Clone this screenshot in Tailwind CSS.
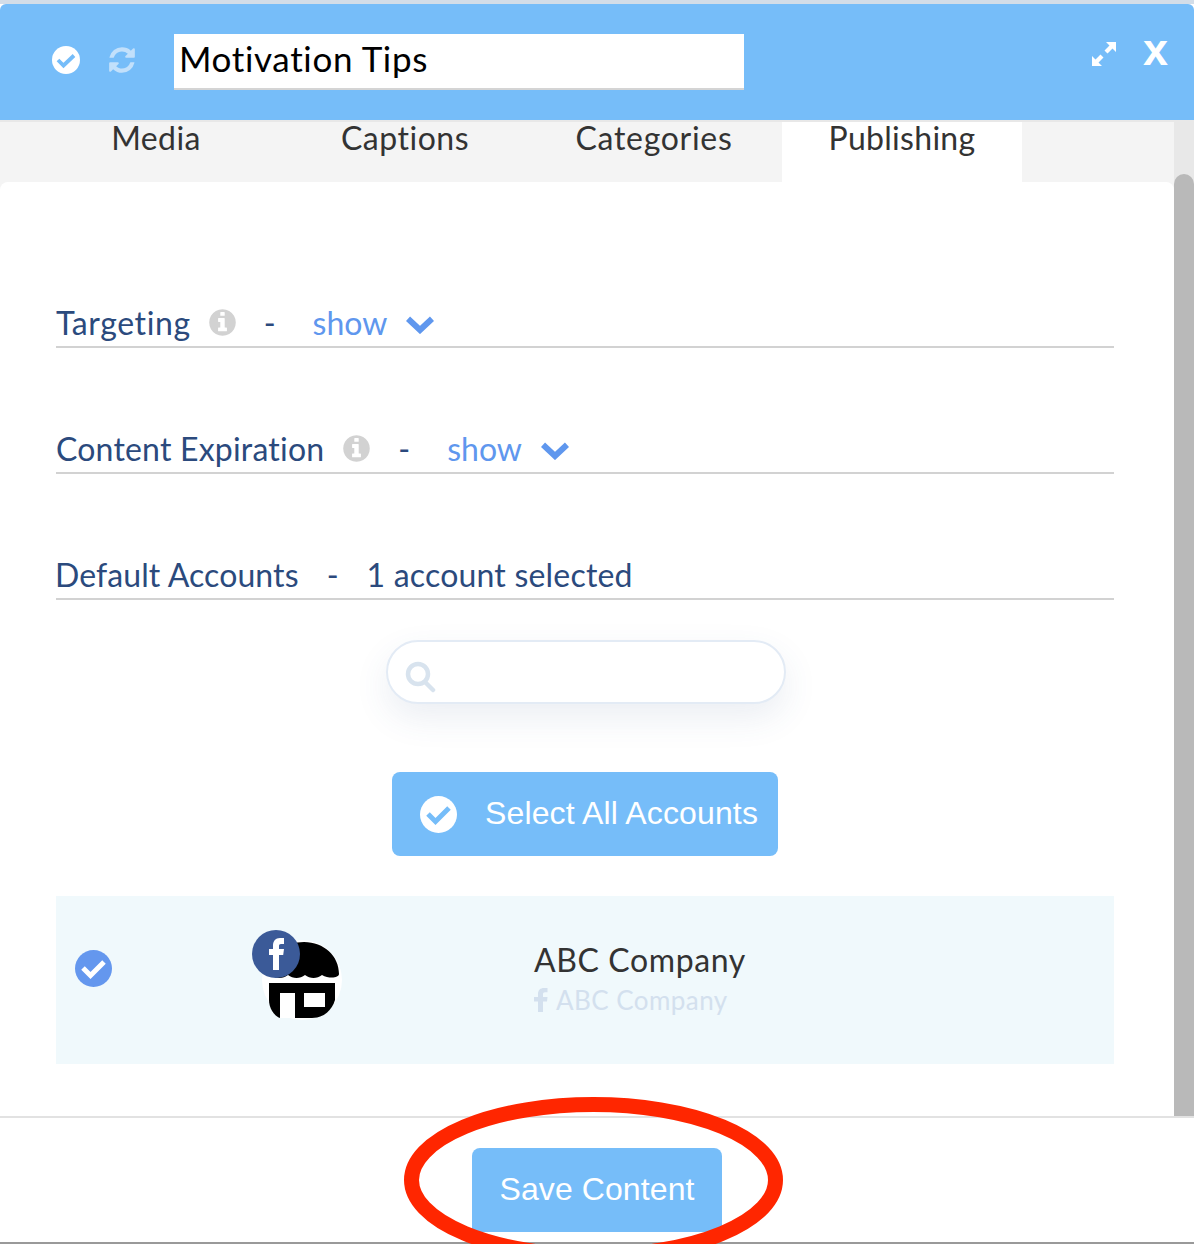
<!DOCTYPE html>
<html>
<head>
<meta charset="utf-8">
<script src="https://cdn.jsdelivr.net/npm/@tailwindcss/browser@4"></script>
</head>
<body class="bg-white">
<div class="relative w-[1194px] h-[1244px] overflow-hidden bg-white font-['Lato',sans-serif] flex flex-col">
  <div class="h-[4px] bg-[#d3dde8] shrink-0"></div>
  <header class="h-[116px] shrink-0 bg-[#76bdf9] rounded-t-[6px] flex items-start pt-[30px] pl-[52px] pr-[27px]">
    <svg class="w-[28px] h-[28px] mt-[12px] shrink-0" viewBox="0 0 28 28"><circle cx="14" cy="14" r="14" fill="#fff"/><path d="M6 14l5.500 5.500L22 9.500" fill="none" stroke="#76bdf9" stroke-width="3.800"/></svg>
    <svg class="w-[30px] h-[30px] mt-[11px] ml-[27px] shrink-0" viewBox="0 0 1792 1792"><path fill="#c2e0fb" d="M1639 1056q0 5-1 7-64 268-268 434.5t-478 166.5q-146 0-282.5-55t-243.5-157l-129 129q-19 19-45 19t-45-19-19-45v-448q0-26 19-45t45-19h448q26 0 45 19t19 45-19 45l-137 137q71 66 161 102t187 36q134 0 250-65t186-179q11-17 53-117 8-23 30-23h192q13 0 22.5 9.5t9.5 22.5zm25-800v448q0 26-19 45t-45 19h-448q-26 0-45-19t-19-45 19-45l138-138q-148-137-349-137-134 0-250 65t-186 179q-11 17-53 117-8 23-30 23h-199q-13 0-22.5-9.5t-9.5-22.5v-7q65-268 270-434.5t480-166.5q146 0 284 55.5t245 156.5l130-129q19-19 45-19t45 19 19 45z"/></svg>
    <div class="w-[570px] h-[56px] ml-[37px] bg-white border-b-2 border-[#d4d4d4] pl-[5px] text-[35px] leading-[48px] text-black tracking-[0.65px]">Motivation Tips</div>
    <svg class="w-[24px] h-[24px] mt-[8px] ml-auto shrink-0" viewBox="0 0 24 24" fill="#fff"><path d="M14 0h10v10l-3.500-3.500-5 5-3-3 5-5zM0 24V14l3.500 3.500 5-5 3 3-5 5L10 24z"/></svg>
    <div class="ml-[27px] w-[24px] h-[30px] text-[45px] leading-[30px] mt-[1px] font-bold text-white text-center font-['Liberation_Sans',sans-serif]">x</div>
  </header>
  <div class="flex flex-1 min-h-0 border-t-2 border-[#e8e8e8]">
    <div class="w-[1174px] shrink-0 flex flex-col bg-[#f4f4f4]">
      <nav class="h-[60px] shrink-0 flex gap-[9px] pl-[36px] text-[32px] text-[#333] leading-[32px]">
        <div class="w-[240px] text-center tracking-[0.4px]">Media</div>
        <div class="w-[240px] text-center tracking-[0.5px]">Captions</div>
        <div class="w-[240px] text-center tracking-[0.7px]">Categories</div>
        <div class="w-[240px] -ml-[1px] text-center bg-white tracking-[0.3px]">Publishing</div>
      </nav>
      <main class="flex-1 bg-white rounded-t-[8px] pt-[116px] pl-[56px] pr-[60px] text-[#2b4a7d] text-[32px]">
        <div class="h-[50px] pt-[2px] flex items-center border-b-2 border-[#d2d2d2]">
          <span class="tracking-[0.6px]">Targeting</span>
          <svg class="w-[31px] h-[31px] ml-[16px] -mt-[2px]" viewBox="0 0 1792 1792"><path fill="#d2d2d2" d="M1152 1376v-160q0-14-9-23t-23-9h-96v-512q0-14-9-23t-23-9h-320q-14 0-23 9t-9 23v160q0 14 9 23t23 9h96v320h-96q-14 0-23 9t-9 23v160q0 14 9 23t23 9h448q14 0 23-9t9-23zm-128-896v-160q0-14-9-23t-23-9h-192q-14 0-23 9t-9 23v160q0 14 9 23t23 9h192q14 0 23-9t9-23zm640 416q0 209-103 385.5t-279.5 279.5-385.5 103-385.5-103-279.5-279.5-103-385.5 103-385.5 279.5-279.5 385.5-103 385.5 103 279.5 279.5 103 385.5z"/></svg>
          <span class="ml-[26px]">-</span>
          <span class="ml-[37px] text-[#5f97ee]">show</span>
          <svg class="w-[28px] h-[18px] ml-[19px] mt-[4px]" viewBox="0 0 28 18"><path d="M2 2.800L14 14 26 2.800" fill="none" stroke="#5f97ee" stroke-width="6"/></svg>
        </div>
        <div class="h-[50px] pt-[2px] mt-[76px] flex items-center border-b-2 border-[#d2d2d2]">
          <span class="tracking-[0.2px]">Content Expiration</span>
          <svg class="w-[31px] h-[31px] ml-[17px] -mt-[2px]" viewBox="0 0 1792 1792"><path fill="#d2d2d2" d="M1152 1376v-160q0-14-9-23t-23-9h-96v-512q0-14-9-23t-23-9h-320q-14 0-23 9t-9 23v160q0 14 9 23t23 9h96v320h-96q-14 0-23 9t-9 23v160q0 14 9 23t23 9h448q14 0 23-9t9-23zm-128-896v-160q0-14-9-23t-23-9h-192q-14 0-23 9t-9 23v160q0 14 9 23t23 9h192q14 0 23-9t9-23zm640 416q0 209-103 385.5t-279.5 279.5-385.5 103-385.5-103-279.5-279.5-103-385.5 103-385.5 279.5-279.5 385.5-103 385.5 103 279.5 279.5 103 385.5z"/></svg>
          <span class="ml-[26px]">-</span>
          <span class="ml-[37px] text-[#5f97ee]">show</span>
          <svg class="w-[28px] h-[18px] ml-[19px] mt-[4px]" viewBox="0 0 28 18"><path d="M2 2.800L14 14 26 2.800" fill="none" stroke="#5f97ee" stroke-width="6"/></svg>
        </div>
        <div class="h-[50px] pt-[2px] mt-[76px] flex items-center border-b-2 border-[#d2d2d2]">
          <span class="tracking-[0.1px] -ml-[1px]">Default Accounts</span>
          <span class="ml-[28px]">-</span>
          <span class="ml-[28px] tracking-[0.2px]">1 account selected</span>
        </div>
        <div class="mt-[40px] ml-[330px] w-[400px] h-[64px] rounded-[32px] border-2 border-[#e3ebf5] bg-white shadow-[0_14px_34px_rgba(60,90,140,0.10)] flex items-center pl-[17px]">
          <svg class="w-[32px] h-[32px] mt-[9px]" viewBox="0 0 32 32"><circle cx="13" cy="13" r="10" fill="none" stroke="#d8e3ee" stroke-width="4.500"/><path d="M20 21l8 8" stroke="#d8e3ee" stroke-width="4.500" stroke-linecap="round"/></svg>
        </div>
        <div class="mt-[68px] ml-[336px] w-[386px] h-[84px] rounded-[8px] bg-[#76bdf9] flex items-center pl-[28px] text-white text-[32px] tracking-[0.14px] font-['Liberation_Sans',sans-serif]">
          <svg class="w-[37px] h-[37px] shrink-0" viewBox="0 0 37 37"><circle cx="18.500" cy="18.500" r="18.500" fill="#fff"/><path d="M8 18l7.500 7.500L29 12" fill="none" stroke="#76bdf9" stroke-width="5"/></svg>
          <span class="ml-[28px] -mt-[2px]">Select All Accounts</span>
        </div>
        <div class="mt-[40px] h-[168px] bg-[#f0f9fc] flex items-start">
          <svg class="w-[37px] h-[37px] mt-[54px] ml-[19px] shrink-0" viewBox="0 0 37 37"><circle cx="18.500" cy="18.500" r="18.500" fill="#6497ee"/><path d="M8 18l7.500 7.500L29 12" fill="none" stroke="#fff" stroke-width="5"/></svg>
          <div class="relative w-[80px] h-[80px] mt-[44px] ml-[150px] shrink-0">
            <svg class="w-[80px] h-[80px]" viewBox="0 0 80 80">
              <circle cx="40" cy="40" r="40" fill="#fff"/>
              <path d="M8 33C8 14 24 2 42 2c20 0 35 14 35 32 0 4-10 5-17 1-5 4-12 4-17 0-5 4-12 4-17 0-5 4-12 4-17 0z" fill="#000"/>
              <path d="M7 43H73V60C70 70 62 78 50 78H18C12 76 7 68 7 60Z" fill="#000"/>
              <path d="M18 53H33V78H18zM42 53H63V67H42z" fill="#fff"/>
            </svg>
            <div class="absolute left-[-10px] top-[-10px] w-[48px] h-[48px] rounded-full bg-[#3b5a98] flex items-center justify-center">
              <svg class="w-[30px] h-[34px]" viewBox="0 0 30 34"><path fill="#fff" d="M12 33V18H8v-6h4V8.500C12 4 14.500 1 19 1h4v6h-3c-1.500 0-2 .8-2 2.200V12h5l-.8 6H18v15z"/></svg>
            </div>
          </div>
          <div class="ml-[192px] mt-[44px] text-[32px] leading-[40px] text-[#333]">
            <div class="tracking-[0.6px]">ABC Company</div>
            <div class="flex items-center text-[26px] leading-[40px] text-[#d3e0ee]">
              <svg class="w-[14px] h-[24px] mr-[8px]" viewBox="0 0 14 24"><path fill="#d3e0ee" d="M4 24V13.500H0V9h4V6C4 2 6.500 0 9.800 0H13.500v4.300H11C9.500 4.300 9 5 9 6.300V9h4.500L13 13.500H9V24z"/></svg>
              <span class="tracking-[0.45px]">ABC Company</span>
            </div>
          </div>
        </div>
      </main>
    </div>
    <aside class="flex-1 bg-[#e8e8e8] pt-[52px]">
      <div class="h-full bg-[#b9b9b9] rounded-t-[10px]"></div>
    </aside>
  </div>
  <footer class="h-[128px] shrink-0 bg-white border-t-2 border-[#e2e2e2] border-b-2 border-b-[#999] flex justify-center pt-[30px]">
    <div class="w-[250px] h-[84px] rounded-t-[8px] bg-[#76bdf9] text-white text-[32px] tracking-[0.1px] text-center leading-[82px] font-['Liberation_Sans',sans-serif]">Save Content</div>
  </footer>
  <svg class="absolute left-[404px] top-[1097px] w-[380px] h-[168px] pointer-events-none" viewBox="0 0 380 168"><ellipse cx="189.500" cy="83" rx="182" ry="75.500" fill="none" stroke="#ff2600" stroke-width="15"/></svg>
</div>
</body>
</html>
